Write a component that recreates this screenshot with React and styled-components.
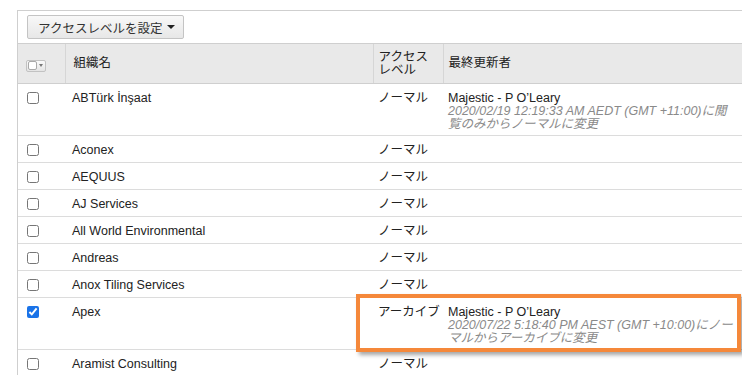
import styled, { createGlobalStyle } from 'styled-components'

const GlobalStyle = createGlobalStyle`
    html, body {
        margin:0;
        padding:0;
        background:#fff;
        overflow:hidden;
    }
    body {
        font-family:"Liberation Sans", "Noto Sans CJK JP", sans-serif;
        font-size:12.5px;
        color:#222;
    }
`

const rows = [
    {
        name: 'ABTürk İnşaat',
        level: 'ノーマル',
        user: 'Majestic - P O’Leary',
        note: ['2020/02/19 12:19:33 AM AEDT (GMT +11:00)に閲', '覧のみからノーマルに変更'],
    },
    { name: 'Aconex', level: 'ノーマル' },
    { name: 'AEQUUS', level: 'ノーマル' },
    { name: 'AJ Services', level: 'ノーマル' },
    { name: 'All World Environmental', level: 'ノーマル' },
    { name: 'Andreas', level: 'ノーマル' },
    { name: 'Anox Tiling Services', level: 'ノーマル' },
    {
        name: 'Apex',
        level: 'アーカイブ',
        checked: true,
        user: 'Majestic - P O’Leary',
        note: ['2020/07/22 5:18:40 PM AEST (GMT +10:00)にノー', 'マルからアーカイブに変更'],
    },
    { name: 'Aramist Consulting', level: 'ノーマル' },
]

function App() {
    return (
        <>
            <GlobalStyle />
            <Panel>
                <Toolbar>
                    <SetButton>
                        アクセスレベルを設定
                        <Caret />
                    </SetButton>
                </Toolbar>
                <Table>
                    <colgroup>
                        <col style={{ width: 47 }} />
                        <col style={{ width: 308 }} />
                        <col style={{ width: 70 }} />
                        <col />
                    </colgroup>
                    <thead>
                        <tr>
                            <HeadCell>
                                <SelectAll>
                                    <MiniBox />
                                    <MiniCaret />
                                </SelectAll>
                            </HeadCell>
                            <HeadCell>組織名</HeadCell>
                            <HeadCell>アクセス<br />レベル</HeadCell>
                            <HeadCell>最終更新者</HeadCell>
                        </tr>
                    </thead>
                    <tbody>
                        {rows.map((r) => (
                            <tr key={r.name}>
                                <CheckCell>
                                    <Check type="checkbox" defaultChecked={!!r.checked} />
                                </CheckCell>
                                <Cell>{r.name}</Cell>
                                <Cell>{r.level}</Cell>
                                <Cell>
                                    {r.user}
                                    {r.note && (
                                        <Note>
                                            {r.note[0]}
                                            <br />
                                            {r.note[1]}
                                        </Note>
                                    )}
                                </Cell>
                            </tr>
                        ))}
                    </tbody>
                </Table>
                <Highlight />
            </Panel>
        </>
    )
}

const Panel = styled.div`
    position:relative;
    margin:10px 0 0 17px;
    width:760px;
    height:365px;
    overflow:hidden;
    border-top:1px solid #cfcfcf;
    border-left:1px solid #cfcfcf;
    box-sizing:border-box;
`

const Toolbar = styled.div`
    display:flex;
    align-items:center;
    padding:4px 9px 4px;
    height:24px;
`

const SetButton = styled.button`
    display:flex;
    align-items:center;
    gap:5px;
    height:24px;
    padding:0 8px 0 10px;
    font-family:inherit;
    font-size:12.5px;
    color:#333;
    background:linear-gradient(#f8f8f8, #e7e7e7);
    border:1px solid #c4c4c4;
    border-radius:2px;
`

const Caret = styled.span`
    width:0;
    height:0;
    border-left:4px solid transparent;
    border-right:4px solid transparent;
    border-top:4px solid #222;
`

const Table = styled.table`
    width:100%;
    table-layout:fixed;
    border-collapse:collapse;
`

const HeadCell = styled.th`
    height:39px;
    padding:0 5px;
    text-align:left;
    font-weight:normal;
    line-height:13px;
    vertical-align:middle;
    background:#e9e9e9;
    border-top:1px solid #cfcfcf;
    border-bottom:1px solid #cfcfcf;
    border-left:1px solid #d6d6d6;
    &:first-child {
        border-left:none;
        padding:0 0 0 8px;
    }
    &:nth-child(2) {
        padding-left:8px;
    }
`

const SelectAll = styled.span`
    display:inline-flex;
    align-items:center;
    gap:1px;
    width:17px;
    height:10px;
    padding:0 0 0 1px;
    position:relative;
    top:3px;
    border:1px solid #c2c2c2;
    border-radius:2px;
    background:linear-gradient(#fafafa, #e4e4e4);
`

const MiniBox = styled.span`
    width:7px;
    height:7px;
    border:1px solid #a9a9a9;
    border-radius:2px;
    background:#fff;
`

const MiniCaret = styled.span`
    margin-left:1px;
    width:0;
    height:0;
    border-left:2.5px solid transparent;
    border-right:2.5px solid transparent;
    border-top:3px solid #777;
`

const Cell = styled.td`
    padding:7px 5px 5px;
    line-height:14px;
    vertical-align:top;
    white-space:nowrap;
    border-bottom:1px solid #dcdcdc;
    &:nth-child(2) {
        padding-left:7px;
    }
`

const CheckCell = styled(Cell)`
    padding:7px 0 5px 6px;
`

const Check = styled.input`
    margin:0 0 0 3px;
    width:12px;
    height:12px;
    vertical-align:top;
    position:relative;
    top:1px;
    accent-color:#1a73e8;
`

const Note = styled.div`
    font-style:italic;
    color:#8a8a8a;
    line-height:12.5px;
`

const Highlight = styled.div`
    position:absolute;
    left:338px;
    top:283px;
    width:385px;
    height:58px;
    box-sizing:border-box;
    border:4px solid #f5883a;
    box-shadow:3px 3px 4px rgba(0, 0, 0, 0.35);
    pointer-events:none;
`

export default App
